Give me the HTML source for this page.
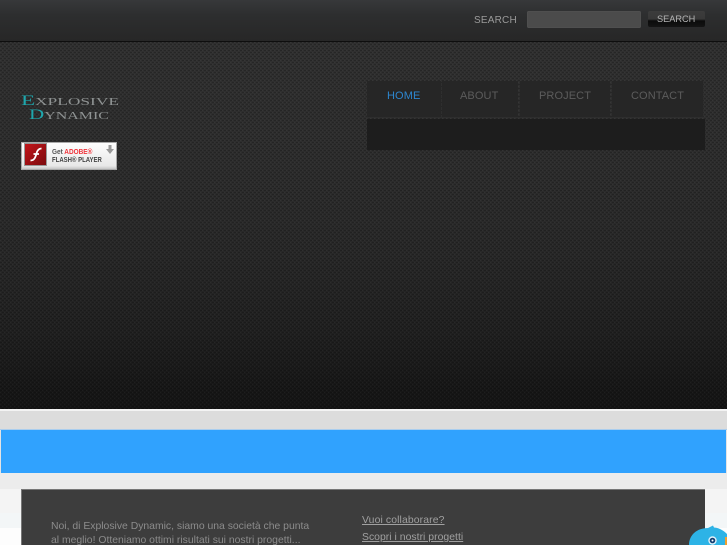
<!DOCTYPE html>
<html><head><meta charset="utf-8"><style>
html,body{margin:0;padding:0;width:727px;height:545px;overflow:hidden;background:#f5f5f5}
body{position:relative;font-family:"Liberation Sans",sans-serif}
div,span,a{position:absolute;display:block;white-space:nowrap}
#main{left:0;top:42px;width:727px;height:367px;background:linear-gradient(#303030 0,#2d2d2d 120px,#282828 210px,#202020 290px,#141414 100%)}
#tex{left:0;top:0}
#top{left:0;top:0;width:727px;height:41px;background:linear-gradient(#37383a 0,#2d2e2f 15px,#272727 100%);border-bottom:1px solid #0e0e0e}
.lg{font-family:'Liberation Serif',serif;font-size:11px;line-height:18px;color:#8f9393;transform-origin:0 50%}
.lg i{font-style:normal;color:#1fa7ad;font-size:14.500px}
.nv{top:89px;font-size:11px;line-height:14px;letter-spacing:.1px;color:#5c5c5c}
.tx{font-size:10.400px;line-height:14px;color:#8c8c8c}
.ln{font-size:10.400px;line-height:14px;letter-spacing:.03px;color:#a0a0a0;text-decoration:underline}
</style></head><body>
<div id="main"><svg id="tex" width="727" height="367" style="position:absolute"><defs><pattern id="p" width="4" height="4" patternUnits="userSpaceOnUse"><rect x="0" y="0" width="2" height="1" fill="#000" opacity=".2"/><rect x="2" y="2" width="2" height="1" fill="#000" opacity=".2"/><rect x="2" y="0" width="1" height="1" fill="#fff" opacity=".03"/><rect x="0" y="2" width="1" height="1" fill="#fff" opacity=".03"/></pattern></defs><rect width="727" height="367" fill="url(#p)"/></svg></div>
<div id="top"></div>
<span style="left:474px;top:15px;font-size:10px;line-height:12px;letter-spacing:.2px;color:#9a9a9a">SEARCH</span>
<div style="left:527px;top:11px;width:114px;height:17px;background:#4b4b4b;border-radius:2px;box-shadow:inset 0 0 1px #666"></div>
<div style="left:648px;top:11px;width:57px;height:16px;background:linear-gradient(#3c3c3c 0,#383838 50%,#0b0b0b 62%,#141414 100%);border-radius:2px"></div>
<span style="left:657px;top:13px;font-size:9.200px;line-height:12px;color:#b5b5b5">SEARCH</span>

<span class="lg" style="left:21px;top:92px;transform:scaleX(1.58)"><i>E</i>XPLOSIVE</span>
<span class="lg" style="left:29px;top:106px;transform:scaleX(1.45)"><i>D</i>YNAMIC</span>

<div style="left:21px;top:142px;width:96px;height:28px;background:linear-gradient(#fff,#e8e8e8 85%,#bbb);box-shadow:inset 0 0 0 1px #aaa"></div>
<div style="left:25px;top:144px;width:21px;height:21px;background:linear-gradient(135deg,#c2161a,#7c0a0e);box-shadow:0 0 0 1px #999"></div>
<svg style="position:absolute;left:25px;top:144px" width="21" height="21"><path d="M5.500 16.500C9.500 16.500 10.500 13 11.500 9.500C12.200 6.500 13.500 4.500 16.500 4.500M8.500 10H14" fill="none" stroke="#fff" stroke-width="1.800"/></svg>
<span style="left:52px;top:147px;font-size:7.500px;line-height:9px;font-weight:bold;color:#555;transform:scaleX(.86);transform-origin:0 0">Get <span style="position:static;display:inline;color:#f0333a">ADOBE®</span></span>
<span style="left:52px;top:155px;font-size:7.500px;line-height:9px;font-weight:bold;color:#444;transform:scaleX(.8);transform-origin:0 0">FLASH® PLAYER</span>
<svg style="position:absolute;left:106px;top:145px" width="8" height="9"><path d="M2.500 0H5.500V4H8L4 9L0 4H2.500Z" fill="#999"/></svg>

<div style="left:367px;top:81px;width:74px;height:36px;background:#262626"></div>
<div style="left:442px;top:81px;width:76px;height:36px;background:#262626"></div>
<div style="left:520px;top:81px;width:90px;height:36px;background:#262626"></div>
<div style="left:612px;top:81px;width:91px;height:36px;background:#262626"></div>
<span class="nv" style="left:387px;color:#2d86cf">HOME</span>
<span class="nv" style="left:460px">ABOUT</span>
<span class="nv" style="left:539px">PROJECT</span>
<span class="nv" style="left:631px">CONTACT</span>
<div style="left:367px;top:119px;width:338px;height:31px;background:#1d1d1d"></div>

<div style="left:0;top:409px;width:727px;height:2px;background:#f3f3f3"></div>
<div style="left:0;top:411px;width:727px;height:18px;background:#dcdcdc"></div>
<div style="left:0;top:429px;width:727px;height:1px;background:#a9cdee"></div>
<div style="left:0;top:430px;width:1px;height:43px;background:#e4e4e4"></div>
<div style="left:1px;top:430px;width:725px;height:43px;background:#30a2fe"></div>
<div style="left:726px;top:430px;width:1px;height:43px;background:#e4e4e4"></div>
<div style="left:0;top:473px;width:727px;height:16px;background:#ececec"></div>
<div style="left:0;top:489px;width:727px;height:24px;background:#f4f4f4"></div>
<div style="left:0;top:513px;width:727px;height:15px;background:#f3f6f7"></div>
<div style="left:0;top:528px;width:727px;height:17px;background:#fdfdfd"></div>

<div style="left:21px;top:489px;width:684px;height:56px;background:#3d3d3d;border-top:1px solid #777;border-left:1px solid #777;box-sizing:border-box"></div>
<span class="tx" style="left:51px;top:520px">Noi, di Explosive Dynamic, siamo una società che punta</span>
<span class="tx" style="left:51px;top:534px">al meglio! Otteniamo ottimi risultati sui nostri progetti...</span>
<a class="ln" style="left:362px;top:514px;letter-spacing:.12px">Vuoi collaborare?</a>
<a class="ln" style="left:362px;top:531px">Scopri i nostri progetti</a>

<svg style="position:absolute;left:677px;top:515px" width="50" height="30"><path d="M12 30C12 20 20 13 31 13L36 10.500L37 12.500C43 13 47 16 50 19V30Z" fill="#2db3e6"/><rect x="48" y="22" width="2" height="8" fill="#f0a030"/><circle cx="35.500" cy="25.500" r="4.200" fill="#dff2fa"/><circle cx="35.500" cy="25.500" r="2.800" fill="#123f73"/><circle cx="35.500" cy="25.500" r="1" fill="#fff"/></svg>
</body></html>
